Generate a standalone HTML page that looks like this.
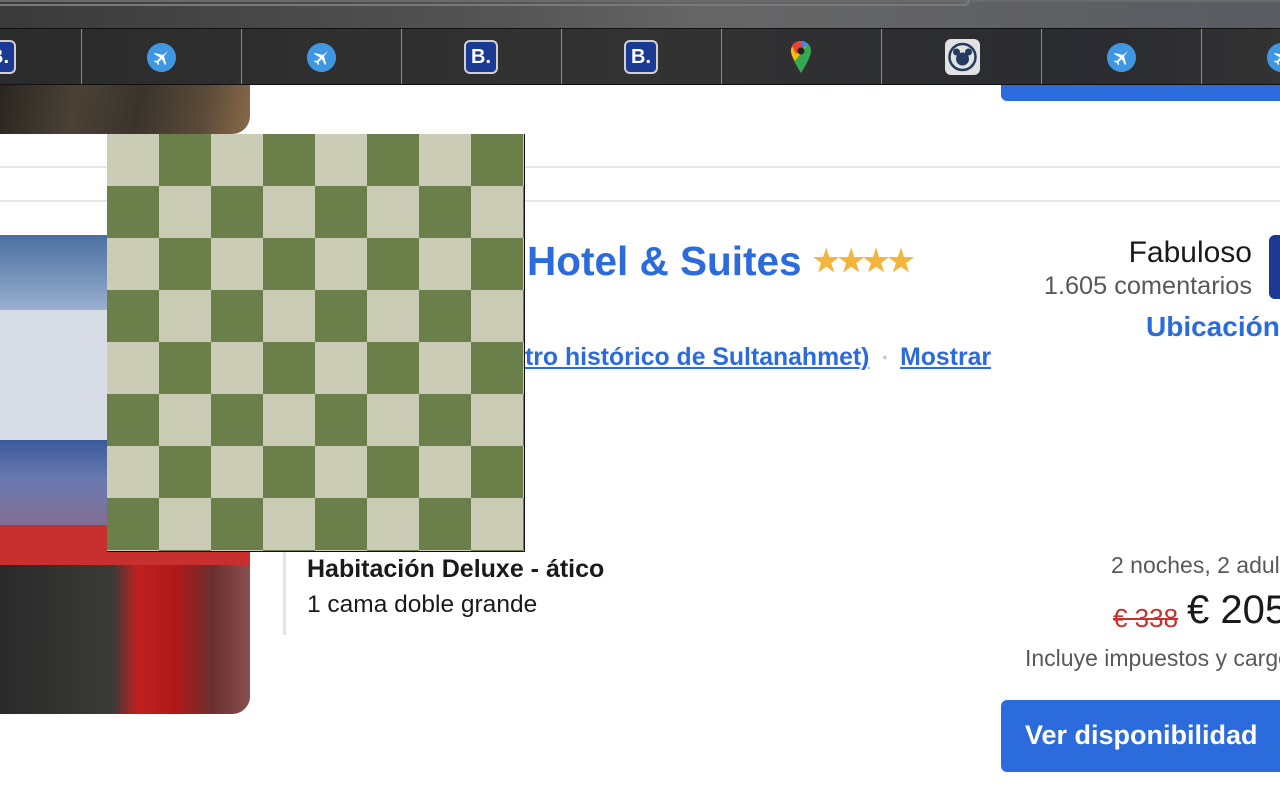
<!DOCTYPE html>
<html><head><meta charset="utf-8"><style>
*{margin:0;padding:0;box-sizing:border-box}
body{width:1280px;height:800px;overflow:hidden;background:#fff;position:relative;font-family:"Liberation Sans",Arial,sans-serif}
.a{position:absolute}
.tabbar{left:0;top:0;width:1280px;height:29px;background:linear-gradient(90deg,#3a3a3a 0%,#555 40%,#666 55%,#5a5c62 100%);border-top:2px solid #6a6a6a}
.tabbar .t{position:absolute;left:-20px;top:-2px;width:990px;height:6px;border:2px solid #7a7a7a;border-top:none;border-radius:0 0 8px 8px}
.bm{left:0;top:28px;width:1280px;height:57px;background:linear-gradient(90deg,#2b2b2b,#333 50%,#2a2b30 85%,#333);border-top:1px solid #111;border-bottom:1px solid #111}
.sep{top:29px;width:1px;height:55px;background:#8a8a8a}
.bk{width:34px;height:34px;border-radius:6px;background:#1b3a93;border:2px solid #d0d0d0;color:#fff;font-weight:bold;font-size:20px;text-align:center;line-height:30px;top:40px}
.pl{width:29px;height:29px;border-radius:50%;background:#3e97e0;top:43px}
.line{left:0;width:1280px;height:2px;background:#e6e6e6}
</style></head><body>
<div class="a tabbar"><div class="t"></div></div>
<div class="a bm"></div>
<div class="a sep" style="left:81px"></div><div class="a sep" style="left:241px"></div><div class="a sep" style="left:401px"></div><div class="a sep" style="left:561px"></div><div class="a sep" style="left:721px"></div><div class="a sep" style="left:881px"></div><div class="a sep" style="left:1041px"></div><div class="a sep" style="left:1201px"></div>
<div class="a bk" style="left:-18px">B.</div>
<div class="a bk" style="left:464px">B.</div>
<div class="a bk" style="left:624px">B.</div>
<svg class="a pl" style="left:147px" viewBox="0 0 29 29"><circle cx="14.5" cy="14.5" r="14.5" fill="#3e97e0"/><path d="M21 8 L16 12 L8 10 L7 11 L13 14.5 L10 18 L7.5 17.5 L7 18.5 L10 20 L11 22 L12 21.5 L11.5 19 L15 16 L18 22 L19 21 L17 13 L21 8Z" fill="#fff"/></svg>
<svg class="a pl" style="left:307px" viewBox="0 0 29 29"><circle cx="14.5" cy="14.5" r="14.5" fill="#3e97e0"/><path d="M21 8 L16 12 L8 10 L7 11 L13 14.5 L10 18 L7.5 17.5 L7 18.5 L10 20 L11 22 L12 21.5 L11.5 19 L15 16 L18 22 L19 21 L17 13 L21 8Z" fill="#fff"/></svg>
<svg class="a pl" style="left:1107px" viewBox="0 0 29 29"><circle cx="14.5" cy="14.5" r="14.5" fill="#3e97e0"/><path d="M21 8 L16 12 L8 10 L7 11 L13 14.5 L10 18 L7.5 17.5 L7 18.5 L10 20 L11 22 L12 21.5 L11.5 19 L15 16 L18 22 L19 21 L17 13 L21 8Z" fill="#fff"/></svg>
<svg class="a pl" style="left:1267px" viewBox="0 0 29 29"><circle cx="14.5" cy="14.5" r="14.5" fill="#3e97e0"/><path d="M21 8 L16 12 L8 10 L7 11 L13 14.5 L10 18 L7.5 17.5 L7 18.5 L10 20 L11 22 L12 21.5 L11.5 19 L15 16 L18 22 L19 21 L17 13 L21 8Z" fill="#fff"/></svg>
<svg class="a" style="left:790px;top:40px" width="22" height="34" viewBox="0 0 22 34"><path d="M11 1C5 1 1 5.5 1 11c0 7 10 22 10 22s10-15 10-22C21 5.5 17 1 11 1z" fill="#34a853"/><path d="M11 1C5 1 1 5.5 1 11c0 3 2 7 4 10L18 4C16 2 14 1 11 1z" fill="#fbbc04"/><path d="M2 6C3 3 7 1 11 1c3 0 5 1 7 3L6 14z" fill="#ea4335"/><path d="M11 1c3 0 5 1 7 3l-5 5z" fill="#4285f4"/><circle cx="11" cy="11" r="3.5" fill="#222"/></svg>
<div class="a" style="left:945px;top:39px;width:35px;height:36px;border-radius:6px;background:#e2e2e2"></div>
<svg class="a" style="left:945px;top:39px" width="35" height="36" viewBox="0 0 35 36"><circle cx="17.5" cy="18" r="13" fill="none" stroke="#243a5e" stroke-width="2.5"/><circle cx="17.5" cy="20" r="6.5" fill="#243a5e"/><circle cx="11.5" cy="13" r="3.5" fill="#243a5e"/><circle cx="23.5" cy="13" r="3.5" fill="#243a5e"/></svg>

<div class="a" style="left:0;top:85px;width:250px;height:49px;border-radius:0 0 18px 0;background:linear-gradient(100deg,#2a2620 0%,#4a4236 30%,#3a342c 55%,#5a4a38 80%,#8a6a4a 100%)"></div>
<div class="a" style="left:1001px;top:85px;width:279px;height:16px;background:#2c6bdc;border-radius:0 0 0 6px"></div>
<div class="a line" style="top:166px"></div>
<div class="a line" style="top:200px"></div>

<div class="a" style="left:0;top:235px;width:250px;height:479px;border-radius:0 0 18px 0;overflow:hidden;background:#2a2826">
 <div class="a" style="left:0;top:0;width:250px;height:75px;background:linear-gradient(180deg,#4a6fa0,#9ab0d0)"></div>
 <div class="a" style="left:0;top:75px;width:250px;height:130px;background:#d8dce6"></div>
 <div class="a" style="left:0;top:205px;width:250px;height:100px;background:linear-gradient(180deg,#3a5a9a,#6a7ab0 40%,#8a6a8a)"></div>
 <div class="a" style="left:0;top:290px;width:250px;height:40px;background:#c83030"></div>
 <div class="a" style="left:0;top:330px;width:250px;height:149px;background:linear-gradient(90deg,#2a2a2a 0%,#3a3a38 45%,#c02020 55%,#b01818 70%,#6a3030 85%,#8a5050 100%)"></div>
</div>

<div class="a" style="left:107px;top:134px;width:418px;height:418px;border-right:1px solid #111;border-bottom:1px solid #111;background:conic-gradient(#6a7f4a 0deg 90deg,#cbccb6 90deg 180deg,#6a7f4a 180deg 270deg,#cbccb6 270deg 360deg);background-size:104px 104px;background-position:0 0"></div>

<div class="a" style="left:527px;top:238px;font-size:40.5px;font-weight:bold;color:#2c6bdc;white-space:nowrap">Hotel &amp; Suites <span style="color:#f2b43a;font-size:30px;letter-spacing:-2px;vertical-align:4px">★★★★</span></div>
<div class="a" style="left:525px;top:344px;font-size:24.8px;font-weight:bold;color:#2c6bdc;white-space:nowrap"><u>tro histórico de Sultanahmet)</u> <span style="color:#ccc;font-size:14px;vertical-align:3px;margin:0 6px">•</span> <u>Mostrar</u></div>
<div class="a" style="right:28px;top:236px;font-size:30px;color:#1a1a1a">Fabuloso</div>
<div class="a" style="right:28px;top:272px;font-size:25.3px;color:#595959">1.605 comentarios</div>
<div class="a" style="left:1269px;top:235px;width:30px;height:64px;background:#1b3a93;border-radius:6px 0 0 6px"></div>
<div class="a" style="left:1146px;top:311px;font-size:28px;font-weight:bold;color:#2c6bdc;white-space:nowrap">Ubicación</div>

<div class="a" style="left:283px;top:552px;width:3px;height:83px;background:#e4e4e4"></div>
<div class="a" style="left:307px;top:555px;font-size:25px;font-weight:bold;color:#1a1a1a;white-space:nowrap">Habitación Deluxe - ático</div>
<div class="a" style="left:307px;top:591px;font-size:24.5px;color:#1a1a1a;white-space:nowrap">1 cama doble grande</div>

<div class="a" style="left:1111px;top:552px;font-size:23px;color:#595959;white-space:nowrap">2 noches, 2 adultos</div>
<div class="a" style="left:1113px;top:603px;font-size:26px;color:#c8302d;text-decoration:line-through;white-space:nowrap">€ 338</div>
<div class="a" style="left:1187px;top:588px;font-size:40px;color:#1a1a1a;white-space:nowrap">€ 205</div>
<div class="a" style="left:1025px;top:645px;font-size:23px;color:#595959;white-space:nowrap">Incluye impuestos y cargos</div>
<div class="a" style="left:1001px;top:700px;width:300px;height:72px;background:#2c6bdc;border-radius:6px"></div>
<div class="a" style="left:1025px;top:720px;font-size:27px;font-weight:bold;color:#fff;white-space:nowrap">Ver disponibilidad</div>
</body></html>
